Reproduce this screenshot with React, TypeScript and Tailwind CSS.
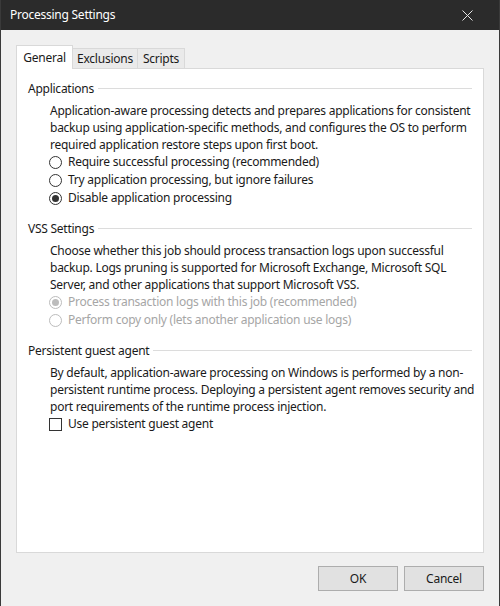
import React from "react";

const font = { fontFamily: '"Noto Sans", "Open Sans", Arial, sans-serif' };

const Radio = ({ checked, disabled }: { checked?: boolean; disabled?: boolean }) => (
  <span
    className={`-ml-[1px] flex h-[13px] w-[13px] shrink-0 items-center justify-center rounded-full border bg-white ${
      disabled ? "border-[#bcbcbc]" : "border-[#333333]"
    }`}
  >
    {checked && (
      <span className={`h-[7px] w-[7px] rounded-full ${disabled ? "bg-[#bcbcbc]" : "bg-[#333333]"}`} />
    )}
  </span>
);

const Group = ({ title, children, first }: { title: string; children: React.ReactNode; first?: boolean }) => (
  <div className={first ? "" : "mt-[13px]"}>
    <div className="flex h-[17px] items-center gap-[4px]">
      <span className="text-[#1a1a1a]">{title}</span>
      <span className="h-px flex-1 bg-[#dcdcdc]" />
    </div>
    <div className="ml-[22px] mt-[5px]">{children}</div>
  </div>
);

const Line = ({ children }: { children: React.ReactNode }) => (
  <div className="h-[17px] whitespace-nowrap leading-[17px] text-[#1a1a1a]">{children}</div>
);

const Option = ({ label, checked, disabled }: { label: string; checked?: boolean; disabled?: boolean }) => (
  <label className="flex h-[18px] items-center gap-[6px]">
    <Radio checked={checked} disabled={disabled} />
    <span className={`whitespace-nowrap ${disabled ? "text-[#a6a6a6]" : "text-[#1a1a1a]"}`}>{label}</span>
  </label>
);

export default function App() {
  return (
    <div
      style={font}
      className="flex h-[606px] w-[500px] flex-col border-x border-[#3a3a3a] bg-[#f0f0f0] text-[12px] tracking-[-0.25px]"
    >
      {/* Title bar */}
      <div className="flex h-[30px] shrink-0 items-center justify-between bg-[#2b2b2b] pl-[9px] pr-[26px] text-white">
        <span className="text-[12px]">Processing Settings</span>
        <svg width="11" height="11" viewBox="0 0 11 11" className="text-[#e6e6e6]">
          <path d="M0.5 0.5 L10.5 10.5 M10.5 0.5 L0.5 10.5" stroke="currentColor" strokeWidth="1" />
        </svg>
      </div>

      <div className="flex flex-1 flex-col px-[15px] pt-[15px]">
        {/* Tabs */}
        <div className="relative z-10 -mb-px flex h-[24px] items-end">
          <div className="flex h-[24px] w-[57px] items-center justify-center border border-b-0 border-[#d9d9d9] bg-white text-[#1a1a1a]">
            General
          </div>
          <div className="mb-px flex h-[20px] w-[65px] items-center justify-center border border-b-0 border-l-0 border-[#d9d9d9] bg-[#eaeaea] text-[#1a1a1a]">
            Exclusions
          </div>
          <div className="mb-px flex h-[20px] w-[47px] items-center justify-center border border-b-0 border-l-0 border-[#d9d9d9] bg-[#eaeaea] text-[#1a1a1a]">
            Scripts
          </div>
        </div>

        {/* Panel */}
        <div className="h-[485px] border border-[#d9d9d9] bg-white px-[11px] pt-[11px]">
          <Group title="Applications" first>
            <Line>Application-aware processing detects and prepares applications for consistent</Line>
            <Line>backup using application-specific methods, and configures the OS to perform</Line>
            <Line>required application restore steps upon first boot.</Line>
            <Option label="Require successful processing (recommended)" />
            <Option label="Try application processing, but ignore failures" />
            <Option label="Disable application processing" checked />
          </Group>

          <Group title="VSS Settings">
            <Line>Choose whether this job should process transaction logs upon successful</Line>
            <Line>backup. Logs pruning is supported for Microsoft Exchange, Microsoft SQL</Line>
            <Line>Server, and other applications that support Microsoft VSS.</Line>
            <Option label="Process transaction logs with this job (recommended)" checked disabled />
            <Option label="Perform copy only (lets another application use logs)" disabled />
          </Group>

          <Group title="Persistent guest agent">
            <Line>By default, application-aware processing on Windows is performed by a non-</Line>
            <Line>persistent runtime process. Deploying a persistent agent removes security and</Line>
            <Line>port requirements of the runtime process injection.</Line>
            <label className="flex h-[18px] items-center gap-[6px]">
              <span className="-ml-[1px] h-[13px] w-[13px] shrink-0 border border-[#333333] bg-white" />
              <span className="whitespace-nowrap text-[#1a1a1a]">Use persistent guest agent</span>
            </label>
          </Group>
        </div>

        {/* Buttons */}
        <div className="mt-[13px] flex justify-end gap-[6px]">
          <button className="h-[25px] w-[80px] border border-[#adadad] bg-[#e1e1e1] text-[#1a1a1a]">OK</button>
          <button className="h-[25px] w-[80px] border border-[#adadad] bg-[#e1e1e1] text-[#1a1a1a]">Cancel</button>
        </div>
      </div>
    </div>
  );
}
